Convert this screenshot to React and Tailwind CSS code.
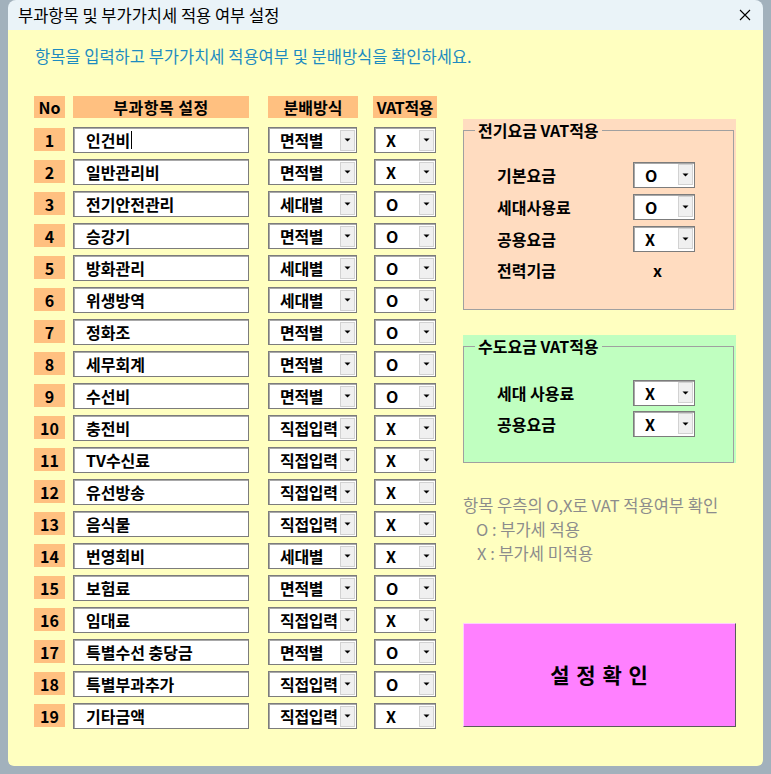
const rows = [
  ["인건비", "면적별", "X"],
  ["일반관리비", "면적별", "X"],
  ["전기안전관리", "세대별", "O"],
  ["승강기", "면적별", "O"],
  ["방화관리", "세대별", "O"],
  ["위생방역", "세대별", "O"],
  ["정화조", "면적별", "O"],
  ["세무회계", "면적별", "O"],
  ["수선비", "면적별", "O"],
  ["충전비", "직접입력", "X"],
  ["TV수신료", "직접입력", "X"],
  ["유선방송", "직접입력", "X"],
  ["음식물", "직접입력", "X"],
  ["번영회비", "세대별", "X"],
  ["보험료", "면적별", "O"],
  ["임대료", "직접입력", "X"],
  ["특별수선 충당금", "면적별", "O"],
  ["특별부과추가", "직접입력", "O"],
  ["기타금액", "직접입력", "X"],
]

const sunken = "border border-[#7c7c7c] bg-white shadow-[inset_1px_1px_0_#a8a8a8]"

function Arrow() {
  return (
    <span className="mr-[1px] flex h-[21px] w-[15px] shrink-0 items-center justify-center border border-[#d2d2d2] bg-[#f0f0f0]">
      <svg width="7" height="4" viewBox="0 0 7 4">
        <path d="M0.5 0.5h6L3.5 3.5z" fill="#000" />
      </svg>
    </span>
  )
}

function Combo({ value, className }) {
  return (
    <div className={`flex h-[26px] items-center ${sunken} ${className}`}>
      <span className="min-w-0 flex-1 whitespace-nowrap pl-[11px] text-[16px] font-bold leading-[20px] tracking-[-0.3px]">
        {value}
      </span>
      <Arrow />
    </div>
  )
}

function Row({ no, r }) {
  return (
    <div className="flex h-[26px] items-start">
      <div className="mt-[1px] flex h-[23px] w-[31px] items-center justify-center bg-[#ffc080] text-[16px] font-bold leading-[20px]">
        {no}
      </div>
      <div className={`ml-[8px] flex h-[26px] w-[176px] items-center pl-[12px] ${sunken}`}>
        <span className="text-[16px] font-bold leading-[20px]">{r[0]}</span>
        {no === 1 && <span className="ml-[1px] h-[18px] w-[1px] bg-black" />}
      </div>
      <Combo value={r[1]} className="ml-[19px] w-[89px]" />
      <Combo value={r[2]} className="ml-[17px] w-[62px]" />
    </div>
  )
}

function Frame({ title, bg, h, children }) {
  return (
    <div className={`w-[273px] pt-[1px] ${bg} ${h}`}>
      <fieldset className="h-full w-[271px] border border-[#a0a0a0] px-[33px] pb-0">
        <legend className="ml-[-22px] px-[3px] text-[16px] font-bold leading-[20px]">{title}</legend>
        {children}
      </fieldset>
    </div>
  )
}

function OptRow({ label, value, className }) {
  return (
    <div className={`flex h-[25px] items-center ${className}`}>
      <span className="w-[136px] text-[16px] font-bold leading-[20px]">{label}</span>
      {value ? (
        <Combo value={value} className="h-[25px] w-[62px]" />
      ) : (
        <span className="pl-[20px] text-[16px] font-bold leading-[20px]">x</span>
      )}
    </div>
  )
}

export default function App() {
  return (
    <div className="h-[774px] w-[771px] overflow-hidden bg-[#a2b1bc] px-[8px] font-['Noto_Sans_CJK_KR',sans-serif] text-black">
      <div className="flex h-[766px] w-[755px] flex-col overflow-hidden rounded-t-[8px] rounded-b-[6px]">
        <div className="flex h-[30px] shrink-0 items-center justify-between bg-[#eaf3f8] pl-[10px] pr-[10px]">
          <span className="text-[16.5px] leading-[20px]">부과항목 및 부가가치세 적용 여부 설정</span>
          <svg width="12" height="12" viewBox="0 0 12 12" className="mr-[2px]">
            <path d="M1 1L11 11M11 1L1 11" stroke="#000" strokeWidth="1.1" />
          </svg>
        </div>
        <div className="flex-1 bg-[#ffffc0] pl-[26px]">
          <p className="ml-[1px] mt-[16px] text-[16.5px] leading-[20px] text-[#1d8bc0]">
            항목을 입력하고 부가가치세 적용여부 및 분배방식을 확인하세요.
          </p>
          <div className="mt-[30px] flex items-start">
            <div className="flex flex-col">
              <div className="flex h-[22px] text-[16px] font-bold leading-[20px]">
                <div className="flex w-[31px] items-center justify-center bg-[#ffc080]">No</div>
                <div className="ml-[8px] flex w-[176px] items-center justify-center bg-[#ffc080] tracking-[0.5px]">부과항목 설정</div>
                <div className="ml-[19px] flex w-[90px] items-center justify-center bg-[#ffc080]">분배방식</div>
                <div className="ml-[15px] flex w-[64px] items-center justify-center bg-[#ffc080] tracking-[-0.3px]">VAT적용</div>
              </div>
              <div className="mt-[9px] flex flex-col gap-[6px]">
                {rows.map((r, i) => (
                  <Row key={i} no={i + 1} r={r} />
                ))}
              </div>
            </div>
            <div className="ml-[26px] mt-[23px] flex flex-col">
              <Frame title="전기요금 VAT적용" bg="bg-[#ffdcc0]" h="h-[191px]">
                <OptRow label="기본요금" value="O" className="mt-[22px]" />
                <OptRow label="세대사용료" value="O" className="mt-[7px]" />
                <OptRow label="공용요금" value="X" className="mt-[7px]" />
                <OptRow label="전력기금" className="mt-[6px]" />
              </Frame>
              <div className="mt-[25px]">
                <Frame title="수도요금 VAT적용" bg="bg-[#c0ffc0]" h="h-[128px]">
                  <OptRow label="세대 사용료" value="X" className="mt-[24px]" />
                  <OptRow label="공용요금" value="X" className="mt-[6px]" />
                </Frame>
              </div>
              <div className="mt-[30px] text-[16.5px] leading-[24px] text-[#8c8c8c]">
                <p>항목 우측의 O,X로 VAT 적용여부 확인</p>
                <p className="pl-[13px]">O : 부가세 적용</p>
                <p className="pl-[14px]">X : 부가세 미적용</p>
              </div>
              <button className="mt-[58px] flex h-[104px] w-[273px] items-center justify-center border border-t-[#ffd0ff] border-l-[#ffd0ff] border-b-[#5a5a5a] border-r-[#5a5a5a] bg-[#ff80ff] text-[21px] font-bold tracking-[1px]">
                설 정 확 인
              </button>
            </div>
          </div>
        </div>
      </div>
    </div>
  )
}
